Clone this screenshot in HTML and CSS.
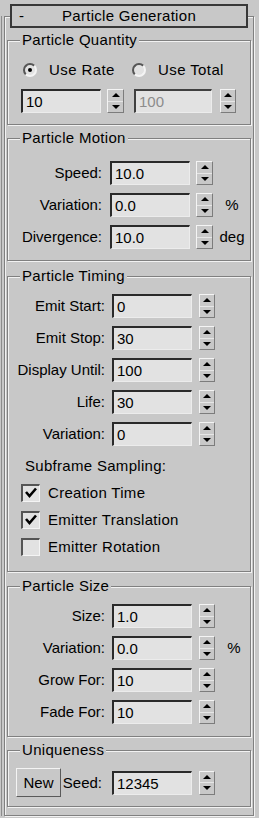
FILE: index.html
```html
<!DOCTYPE html>
<html lang="en">
<head>
  <meta charset="UTF-8">
  <title>Particle Generation</title>
  <link rel="stylesheet" href="styles.css">
</head>
<body>
  <div class="panel">
    <div class="rollout">
      <div class="rollout-head">
        <span class="rollout-toggle">-</span>
        <span class="rollout-title">Particle Generation</span>
        <span></span>
      </div>

      <div class="group group-quantity">
        <div class="group-title">Particle Quantity</div>
        <div class="radio-row">
          <label class="radio"><span class="radio-mark checked"></span>Use Rate</label>
          <label class="radio"><span class="radio-mark"></span>Use Total</label>
        </div>
        <div class="pair-row">
          <div class="field">10</div>
          <div class="spin"><span class="spin-up"></span><span class="spin-down"></span></div>
          <div class="field disabled">100</div>
          <div class="spin"><span class="spin-up"></span><span class="spin-down"></span></div>
        </div>
      </div>

      <div class="group group-motion">
        <div class="group-title">Particle Motion</div>
        <div class="param-list">
          <div class="param">
            <span class="param-label">Speed:</span>
            <div class="field">10.0</div>
            <div class="spin"><span class="spin-up"></span><span class="spin-down"></span></div>
          </div>
          <div class="param">
            <span class="param-label">Variation:</span>
            <div class="field">0.0</div>
            <div class="spin"><span class="spin-up"></span><span class="spin-down"></span></div>
            <span class="param-unit">%</span>
          </div>
          <div class="param">
            <span class="param-label">Divergence:</span>
            <div class="field">10.0</div>
            <div class="spin"><span class="spin-up"></span><span class="spin-down"></span></div>
            <span class="param-unit">deg</span>
          </div>
        </div>
      </div>

      <div class="group group-timing">
        <div class="group-title">Particle Timing</div>
        <div class="param-list">
          <div class="param">
            <span class="param-label">Emit Start:</span>
            <div class="field">0</div>
            <div class="spin"><span class="spin-up"></span><span class="spin-down"></span></div>
          </div>
          <div class="param">
            <span class="param-label">Emit Stop:</span>
            <div class="field">30</div>
            <div class="spin"><span class="spin-up"></span><span class="spin-down"></span></div>
          </div>
          <div class="param">
            <span class="param-label">Display Until:</span>
            <div class="field">100</div>
            <div class="spin"><span class="spin-up"></span><span class="spin-down"></span></div>
          </div>
          <div class="param">
            <span class="param-label">Life:</span>
            <div class="field">30</div>
            <div class="spin"><span class="spin-up"></span><span class="spin-down"></span></div>
          </div>
          <div class="param">
            <span class="param-label">Variation:</span>
            <div class="field">0</div>
            <div class="spin"><span class="spin-up"></span><span class="spin-down"></span></div>
          </div>
        </div>
        <div class="subframe-label">Subframe Sampling:</div>
        <div class="check-list">
          <label class="check">
            <span class="check-box">
              <svg viewBox="0 0 19 18" width="19" height="18"><path d="M5 8 L8.5 12 L15 4.5" fill="none" stroke="#000" stroke-width="2.6"/></svg>
            </span>
            Creation Time
          </label>
          <label class="check">
            <span class="check-box">
              <svg viewBox="0 0 19 18" width="19" height="18"><path d="M5 8 L8.5 12 L15 4.5" fill="none" stroke="#000" stroke-width="2.6"/></svg>
            </span>
            Emitter Translation
          </label>
          <label class="check">
            <span class="check-box"></span>
            Emitter Rotation
          </label>
        </div>
      </div>

      <div class="group group-size">
        <div class="group-title">Particle Size</div>
        <div class="param-list">
          <div class="param">
            <span class="param-label">Size:</span>
            <div class="field">1.0</div>
            <div class="spin"><span class="spin-up"></span><span class="spin-down"></span></div>
          </div>
          <div class="param">
            <span class="param-label">Variation:</span>
            <div class="field">0.0</div>
            <div class="spin"><span class="spin-up"></span><span class="spin-down"></span></div>
            <span class="param-unit">%</span>
          </div>
          <div class="param">
            <span class="param-label">Grow For:</span>
            <div class="field">10</div>
            <div class="spin"><span class="spin-up"></span><span class="spin-down"></span></div>
          </div>
          <div class="param">
            <span class="param-label">Fade For:</span>
            <div class="field">10</div>
            <div class="spin"><span class="spin-up"></span><span class="spin-down"></span></div>
          </div>
        </div>
      </div>

      <div class="group group-unique">
        <div class="group-title">Uniqueness</div>
        <div class="seed-row">
          <button class="new-button" type="button">New</button>
          <span class="seed-label">Seed:</span>
          <div class="field">12345</div>
          <div class="spin"><span class="spin-up"></span><span class="spin-down"></span></div>
        </div>
      </div>
    </div>
  </div>
</body>
</html>
```

FILE: styles.css
```css
html, body {
  margin: 0;
  padding: 0;
}

body {
  width: 259px;
  height: 818px;
  overflow: hidden;
  background-color: #c8c8c8;
  font-family: "Liberation Sans", Arial, sans-serif;
  font-size: 15px;
  line-height: 20px;
  color: #000;
}

.panel {
  margin: 16px 0 0 1px;
  height: 800px;
  border-left: 1px solid #8c8c8c;
}

.rollout {
  margin: 0 5px 0 2px;
  padding: 0 2px 8px 2px;
  border: 1px solid #808080;
  box-shadow: inset 1px 1px 0 #f2f2f2, 1px 1px 0 #f2f2f2;
}

.rollout-head {
  display: grid;
  grid-template-columns: 1fr auto 1fr;
  align-items: center;
  box-sizing: border-box;
  height: 24px;
  margin: -13px 3px 0 3px;
  border: 2px solid #383838;
  background-color: #c8c8c8;
  letter-spacing: 0.3px;
}

.rollout-toggle {
  padding-left: 7px;
}

/* group boxes */

.group {
  margin-top: 13px;
  border: 1px solid #808080;
  box-shadow: inset 1px 1px 0 #f2f2f2, 1px 1px 0 #f2f2f2;
}

.group-quantity {
  margin-top: 12px;
  padding-bottom: 11px;
}

.group-motion {
  padding-bottom: 11px;
}

.group-timing {
  margin-top: 15px;
  padding-bottom: 14px;
}

.group-size {
  margin-top: 14px;
  padding-bottom: 12px;
}

.group-unique {
  padding-bottom: 9px;
}

.group-title {
  display: table;
  margin: -11px 0 0 12px;
  padding: 0 2px;
  background-color: #c8c8c8;
  letter-spacing: 0.3px;
}

/* inputs */

.field {
  box-sizing: border-box;
  width: 80px;
  height: 24px;
  padding-left: 3px;
  line-height: 21px;
  background-color: #e2e2e2;
  border-top: 2px solid #2a2a2a;
  border-left: 2px solid #2a2a2a;
  border-right: 1px solid #ececec;
  border-bottom: 1px solid #ececec;
}

.field.disabled {
  color: #8c8c8c;
  border-top-color: #404040;
  border-left-color: #404040;
}

.spin {
  display: flex;
  flex-direction: column;
  box-sizing: border-box;
  width: 16px;
  height: 24px;
  border-top: 1px solid #f4f4f4;
  border-left: 1px solid #f4f4f4;
  border-right: 1px solid #7c7c7c;
  border-bottom: 1px solid #7c7c7c;
}

.spin-up,
.spin-down {
  flex: 1;
  display: flex;
  align-items: center;
  justify-content: center;
}

.spin-up {
  border-bottom: 1px solid #e6e6e6;
}

.spin-up:after {
  content: "";
  border-left: 4px solid transparent;
  border-right: 4px solid transparent;
  border-bottom: 4px solid #000;
}

.spin-down:after {
  content: "";
  border-left: 4px solid transparent;
  border-right: 4px solid transparent;
  border-top: 4px solid #000;
}

/* particle quantity */

.radio-row {
  display: grid;
  grid-template-columns: 109px auto;
  margin: 10px 0 0 15px;
  height: 20px;
  letter-spacing: 0.4px;
}

.radio {
  display: flex;
  align-items: center;
}

.radio-mark {
  position: relative;
  box-sizing: border-box;
  width: 14px;
  height: 14px;
  margin-right: 12px;
  border-radius: 50%;
  border: 2px solid;
  border-color: #555 #f4f4f4 #f4f4f4 #555;
  background-color: #e2e2e2;
}

.radio-mark.checked:after {
  content: "";
  position: absolute;
  left: 3px;
  top: 3px;
  width: 4px;
  height: 4px;
  border-radius: 50%;
  background-color: #000;
}

.pair-row {
  display: flex;
  align-items: center;
  margin: 9px 0 0 13px;
}

.pair-row .spin {
  width: 17px;
  margin-left: 6px;
}

.pair-row .field.disabled {
  width: 78px;
  margin-left: 10px;
}

.pair-row .spin:last-child {
  width: 16px;
  margin-left: 8px;
}

/* parameter rows */

.param-list {
  display: flex;
  flex-direction: column;
  gap: 8px;
  margin-top: 8px;
}

.param {
  display: flex;
  align-items: center;
  height: 24px;
}

.param-label {
  width: 97px;
  text-align: right;
  white-space: nowrap;
}

.param .field {
  margin-left: 7px;
}

.param .spin {
  margin-left: 7px;
}

.param-unit {
  width: 30px;
  margin-left: 4px;
  text-align: center;
}

.group-motion .param-list {
  margin-top: 13px;
}

.group-motion .param-label {
  width: 94px;
}

.group-motion .param .field {
  margin-left: 8px;
}

.group-motion .param .spin {
  width: 17px;
  margin-left: 6px;
}

/* subframe sampling */

.subframe-label {
  margin: 10px 0 0 17px;
  letter-spacing: 0.3px;
}

.check-list {
  display: flex;
  flex-direction: column;
  gap: 7px;
  margin-top: 7px;
}

.check {
  display: flex;
  align-items: center;
  height: 20px;
  margin-left: 13px;
  letter-spacing: 0.3px;
}

.check-box {
  box-sizing: border-box;
  width: 19px;
  height: 18px;
  margin-right: 8px;
  background-color: #e2e2e2;
  border-top: 2px solid #555;
  border-left: 2px solid #555;
  border-right: 1px solid #f4f4f4;
  border-bottom: 1px solid #f4f4f4;
}

.check-box svg {
  display: block;
  margin: -2px 0 0 -2px;
}

/* uniqueness */

.seed-row {
  display: flex;
  align-items: center;
  margin: 8px 0 0 8px;
}

.new-button {
  box-sizing: border-box;
  width: 45px;
  height: 29px;
  padding: 0;
  font: inherit;
  color: #000;
  background-color: #c8c8c8;
  border-top: 1px solid #f4f4f4;
  border-left: 1px solid #f4f4f4;
  border-right: 1px solid #5a5a5a;
  border-bottom: 1px solid #5a5a5a;
}

.seed-label {
  width: 41px;
  text-align: right;
}

.seed-row .field {
  margin-left: 10px;
}

.seed-row .spin {
  margin-left: 7px;
}
```
